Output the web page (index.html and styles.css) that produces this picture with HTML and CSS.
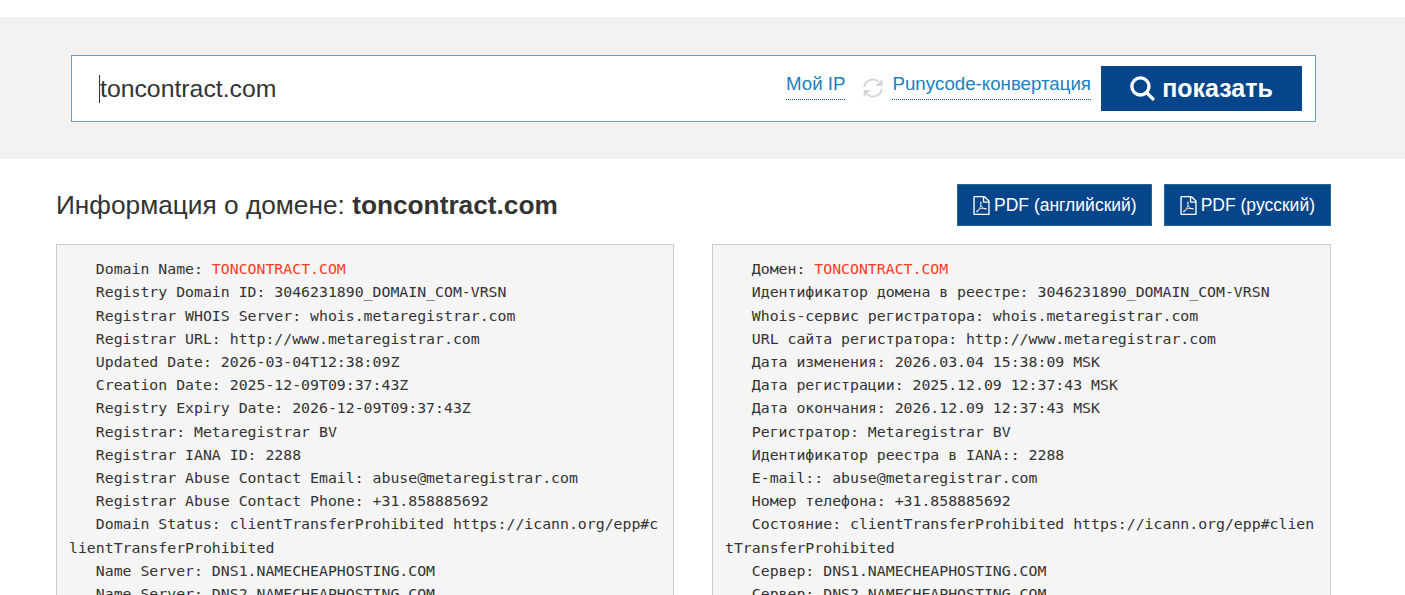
FILE: index.html
```html
<!DOCTYPE html>
<html lang="ru">
<head>
  <meta charset="UTF-8">
  <meta name="viewport" content="width=device-width, initial-scale=1.0">
  <title>Информация о домене: toncontract.com</title>
  <link rel="stylesheet" href="styles.css">
</head>
<body>
  <section class="search-band">
    <form class="search-box">
      <span class="caret"></span>
      <input class="search-input" type="text" value="toncontract.com">
      <a class="dotted-link my-ip" href="#">Мой IP</a>
      <svg class="refresh-icon" viewBox="0 0 20 20"><path class="refresh-arc" d="M1.2 9.2A8.8 8.8 0 0 1 15.6 3.6"/><path class="refresh-arc" d="M18.8 10.8A8.8 8.8 0 0 1 4.4 16.4"/><path d="M19.4 1v7h-7zM.6 19v-7h7z"/></svg>
      <a class="dotted-link" href="#">Punycode-конвертация</a>
      <button class="search-button" type="button">
        <svg class="search-icon" viewBox="0 0 24 24"><circle cx="10" cy="10" r="8.2"/><path d="M16 16l6 6"/></svg>
        показать
      </button>
    </form>
  </section>

  <main class="content">
    <div class="title-row">
      <h1>Информация о домене: <b>toncontract.com</b></h1>
      <div class="pdf-buttons">
        <a class="pdf-button" href="#">
          <svg class="pdf-icon" viewBox="0 0 1792 1792"><path d="M1596 380q28 28 48 76t20 88v1152q0 40-28 68t-68 28h-1344q-40 0-68-28t-28-68v-1600q0-40 28-68t68-28h896q40 0 88 20t76 48zm-444-244v376h376q-10-29-22-41l-313-313q-12-12-41-22zm384 1528v-1024h-416q-40 0-68-28t-28-68v-416h-768v1536h1280zm-514-593q33 26 84 56 59-7 117-7 147 0 177 49 16 22 2 52 0 1-1 2l-2 2v1q-6 38-71 38-48 0-115-20t-130-53q-221 24-392 83-153 262-242 262-15 0-28-7l-24-12q-1-1-6-5-10-10-6-36 9-40 56-91.500t132-96.500q14-9 23 6 2 2 2 4 52-85 107-197 68-136 104-262-24-82-30.500-159.500t6.500-127.500q11-40 42-40h22q23 0 35 15 18 21 9 68-2 6-4 8 1 3 1 8v30q-2 123-14 192 55 164 146 238zm-576 411q52-24 137-158-51 40-87.500 84t-49.500 74zm398-920q-15 42-2 132 1-7 7-44 0-3 7-43 1-4 4-8-1-1-1-2-1-2-1-3-1-22-13-36 0 1-1 2v2zm-124 661q135-54 284-81-2-1-13-9.500t-16-13.500q-76-67-127-176-27 86-83 197-30 56-45 83zm646-16q-24-24-140-24 76 28 124 28 14 0 18-1 0-1-2-3z"/></svg>
          PDF (английский)
        </a>
        <a class="pdf-button pdf-button-ru" href="#">
          <svg class="pdf-icon" viewBox="0 0 1792 1792"><path d="M1596 380q28 28 48 76t20 88v1152q0 40-28 68t-68 28h-1344q-40 0-68-28t-28-68v-1600q0-40 28-68t68-28h896q40 0 88 20t76 48zm-444-244v376h376q-10-29-22-41l-313-313q-12-12-41-22zm384 1528v-1024h-416q-40 0-68-28t-28-68v-416h-768v1536h1280zm-514-593q33 26 84 56 59-7 117-7 147 0 177 49 16 22 2 52 0 1-1 2l-2 2v1q-6 38-71 38-48 0-115-20t-130-53q-221 24-392 83-153 262-242 262-15 0-28-7l-24-12q-1-1-6-5-10-10-6-36 9-40 56-91.500t132-96.500q14-9 23 6 2 2 2 4 52-85 107-197 68-136 104-262-24-82-30.500-159.500t6.500-127.500q11-40 42-40h22q23 0 35 15 18 21 9 68-2 6-4 8 1 3 1 8v30q-2 123-14 192 55 164 146 238zm-576 411q52-24 137-158-51 40-87.500 84t-49.500 74zm398-920q-15 42-2 132 1-7 7-44 0-3 7-43 1-4 4-8-1-1-1-2-1-2-1-3-1-22-13-36 0 1-1 2v2zm-124 661q135-54 284-81-2-1-13-9.500t-16-13.500q-76-67-127-176-27 86-83 197-30 56-45 83zm646-16q-24-24-140-24 76 28 124 28 14 0 18-1 0-1-2-3z"/></svg>
          PDF (русский)
        </a>
      </div>
    </div>

    <div class="whois-columns">
      <pre class="whois">   Domain Name: <span class="domain-name">TONCONTRACT.COM</span>
   Registry Domain ID: 3046231890_DOMAIN_COM-VRSN
   Registrar WHOIS Server: whois.metaregistrar.com
   Registrar URL: http://www.metaregistrar.com
   Updated Date: 2026-03-04T12:38:09Z
   Creation Date: 2025-12-09T09:37:43Z
   Registry Expiry Date: 2026-12-09T09:37:43Z
   Registrar: Metaregistrar BV
   Registrar IANA ID: 2288
   Registrar Abuse Contact Email: abuse@metaregistrar.com
   Registrar Abuse Contact Phone: +31.858885692
   Domain Status: clientTransferProhibited https://icann.org/epp#clientTransferProhibited
   Name Server: DNS1.NAMECHEAPHOSTING.COM
   Name Server: DNS2.NAMECHEAPHOSTING.COM
</pre>
      <pre class="whois">   Домен: <span class="domain-name">TONCONTRACT.COM</span>
   Идентификатор домена в реестре: 3046231890_DOMAIN_COM-VRSN
   Whois-сервис регистратора: whois.metaregistrar.com
   URL сайта регистратора: http://www.metaregistrar.com
   Дата изменения: 2026.03.04 15:38:09 MSK
   Дата регистрации: 2025.12.09 12:37:43 MSK
   Дата окончания: 2026.12.09 12:37:43 MSK
   Регистратор: Metaregistrar BV
   Идентификатор реестра в IANA:: 2288
   E-mail:: abuse@metaregistrar.com
   Номер телефона: +31.858885692
   Состояние: clientTransferProhibited https://icann.org/epp#clientTransferProhibited
   Сервер: DNS1.NAMECHEAPHOSTING.COM
   Сервер: DNS2.NAMECHEAPHOSTING.COM
</pre>
    </div>
  </main>
</body>
</html>
```

FILE: styles.css
```css
html, body {
  height: 100vh;
  overflow: hidden;
}

body {
  margin: 0;
  padding-top: 17px;
  box-sizing: border-box;
  font-family: "Liberation Sans", Arial, sans-serif;
  color: #333;
  background: #fff;
}

.search-band {
  background: #f2f2f2;
  padding: 38px 89px 37px 71px;
}

.search-box {
  display: flex;
  align-items: center;
  height: 67px;
  box-sizing: border-box;
  padding: 0 13px 0 27px;
  background: #fff;
  border: 1px solid #6a9ec6;
}

.caret {
  width: 1px;
  height: 28px;
  background: #333;
}

.search-input {
  flex: 1;
  min-width: 0;
  padding: 0;
  border: none;
  outline: none;
  font-family: inherit;
  font-size: 24.8px;
  color: #333;
}

.dotted-link {
  margin-bottom: 6px;
  padding-bottom: 2px;
  font-size: 18.7px;
  line-height: 26px;
  color: #1a7fbf;
  text-decoration: none;
  border-bottom: 1px dotted #0a5a94;
}

.refresh-icon {
  flex: none;
  width: 20px;
  height: 20px;
  margin: 0 9px 2px 18px;
  fill: #d6d6d6;
}

.refresh-arc {
  fill: none;
  stroke: #d6d6d6;
  stroke-width: 2;
}

.search-button {
  display: flex;
  align-items: center;
  justify-content: center;
  gap: 7px;
  width: 201px;
  height: 45px;
  margin-left: 10px;
  padding: 0;
  border: none;
  background: #07458b;
  color: #fff;
  font-family: inherit;
  font-size: 25px;
  font-weight: bold;
}

.search-icon {
  width: 25px;
  height: 25px;
  fill: none;
  stroke: #fff;
  stroke-width: 3.2;
  stroke-linecap: round;
}

.content {
  padding: 25px 74px 0 56px;
}

.title-row {
  display: flex;
  justify-content: space-between;
  align-items: center;
  height: 42px;
}

h1 {
  margin: 0;
  font-size: 26.25px;
  font-weight: normal;
}

.pdf-buttons {
  display: flex;
  gap: 12px;
}

.pdf-button {
  display: flex;
  align-items: center;
  gap: 3px;
  height: 42px;
  box-sizing: border-box;
  padding: 0 14px;
  background: #07458b;
  border: 1px solid #2a6496;
  color: #fff;
  font-size: 17.5px;
  text-decoration: none;
}

.pdf-button-ru {
  padding-right: 15px;
}

.pdf-icon {
  width: 19px;
  height: 19px;
  fill: #fff;
}

.whois-columns {
  display: grid;
  grid-template-columns: 618px 619px;
  justify-content: space-between;
  margin-top: 18px;
}

.whois {
  margin: 0;
  padding: 12.15px 12px 12px;
  min-width: 0;
  background: #f5f5f5;
  border: 1px solid #ccc;
  font-family: "DejaVu Sans Mono", monospace;
  font-size: 14.83px;
  line-height: 23.2px;
  color: #333;
  white-space: pre-wrap;
  word-break: break-all;
}

.domain-name {
  color: #ff3b1f;
}
```
